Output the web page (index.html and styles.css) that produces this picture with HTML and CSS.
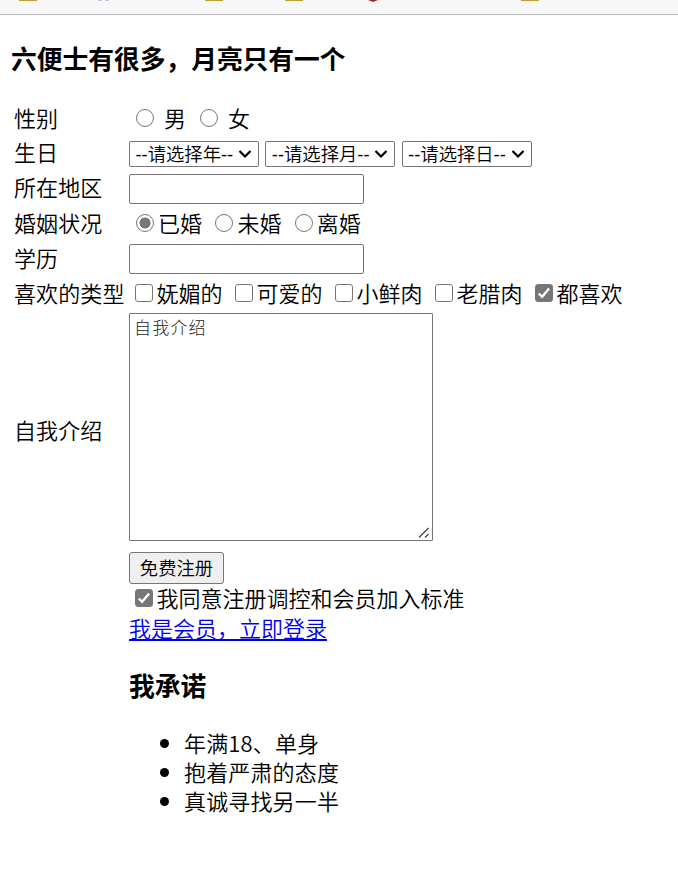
FILE: index.html
```html
<!DOCTYPE html>
<html lang="zh-CN">
<head>
<meta charset="utf-8">
<title>注册</title>
<link rel="stylesheet" href="styles.css">
</head>
<body>
<div class="bookmarks">
  <svg width="678" height="14" viewBox="0 0 678 14">
    <g fill="#c49b3c"><path d="M19 0h18v1H19zM205 0h18v1h-18zM285 0h18v1h-18zM521 0h18v1h-18z"/></g>
    <path d="M94 0h20q-1 2-4 2H98q-3 0-4-2z" fill="#fff"/>
    <path d="M98 0h4v1h-4zM105 0h4v1h-4z" fill="#b9bcf5"/>
    <path d="M368 0h10l-5 2z" fill="#a8232b"/>
  </svg>
</div>
<main>
  <h3 class="title">六便士有很多，月亮只有一个</h3>
  <form class="form">
    <span class="label">性别</span>
    <div class="options gender">
      <label><input type="radio" name="sex">男</label>
      <label><input type="radio" name="sex">女</label>
    </div>

    <span class="label raised">生日</span>
    <div class="selects">
      <span class="select"><select><option>--请选择年--</option></select><svg viewBox="0 0 14 10"><path d="M1.5 2 7 7.5 12.5 2"/></svg></span>
      <span class="select"><select><option>--请选择月--</option></select><svg viewBox="0 0 14 10"><path d="M1.5 2 7 7.5 12.5 2"/></svg></span>
      <span class="select"><select><option>--请选择日--</option></select><svg viewBox="0 0 14 10"><path d="M1.5 2 7 7.5 12.5 2"/></svg></span>
    </div>

    <span class="label raised">所在地区</span>
    <input class="field" type="text">

    <span class="label">婚姻状况</span>
    <div class="options marital">
      <label><input type="radio" name="marital" checked>已婚</label>
      <label><input type="radio" name="marital">未婚</label>
      <label><input type="radio" name="marital">离婚</label>
    </div>

    <span class="label">学历</span>
    <input class="field" type="text">

    <span class="label lowered">喜欢的类型</span>
    <div class="options types">
      <label><input type="checkbox">妩媚的</label>
      <label><input type="checkbox">可爱的</label>
      <label><input type="checkbox">小鲜肉</label>
      <label><input type="checkbox">老腊肉</label>
      <label><input type="checkbox" checked>都喜欢</label>
    </div>

    <span class="label intro-label">自我介绍</span>
    <div class="intro">
      <textarea>自我介绍</textarea>
      <svg class="grip" viewBox="0 0 12 12"><path d="M1 10.5 10.5 1M7 10.5 10.5 7"/></svg>
    </div>

    <div class="footer">
      <button type="button">免费注册</button>
      <div class="options agree"><label><input type="checkbox" checked>我同意注册调控和会员加入标准</label></div>
      <div class="login"><a href="#">我是会员，立即登录</a></div>
      <h3>我承诺</h3>
      <ul>
        <li>年满18、单身</li>
        <li>抱着严肃的态度</li>
        <li>真诚寻找另一半</li>
      </ul>
    </div>
  </form>
</main>
</body>
</html>
```
FILE: styles.css
```css
* { box-sizing: border-box; }
body {
  margin: 0;
  background: #fff;
  color: #000;
  font: 350 22px/29px "Noto Sans CJK SC", sans-serif;
  overflow: hidden;
}
.bookmarks { height: 15px; background: #f7f7f7; border-bottom: 1px solid #b9b9b9; }
.bookmarks svg { display: block; }
h3 { margin: 0; font-size: 25.74px; line-height: 34px; font-weight: 700; }
.title { padding: 26px 0 0 11px; }
.form {
  display: grid;
  grid-template-columns: 110px 1fr;
  grid-template-rows: 30px 30px 30px 30px 30px 29px 228px auto;
  gap: 5px;
  padding: 29px 0 0 14px;
  align-items: center;
}
.label { white-space: nowrap; padding-bottom: 4px; letter-spacing: 0.1px; }
.label.raised { padding-bottom: 6px; }
.label.lowered { padding-bottom: 2px; }
.options { display: flex; white-space: nowrap; }
.options label { display: flex; align-items: center; padding-bottom: 3px; }
input[type="radio"], input[type="checkbox"] {
  appearance: none;
  flex: none;
  width: 18px;
  height: 18px;
  margin: 1px 4px 0 0;
  border: 1px solid #767676;
  background: #fff;
}
input[type="radio"] { border-radius: 50%; }
input[type="radio"]:checked { background: radial-gradient(circle, #767676 5.2px, #fff 5.8px); }
input[type="checkbox"] { border-radius: 3px; }
input[type="checkbox"]:checked {
  background: #767676 url("data:image/svg+xml,%3Csvg xmlns='http://www.w3.org/2000/svg' viewBox='0 0 16 16'%3E%3Cpath d='M2.7 8.5l3.4 3.3 7-8.3' fill='none' stroke='white' stroke-width='2.4'/%3E%3C/svg%3E") center / 16px no-repeat;
}
.gender { padding-left: 7px; gap: 14px; }
.gender input { margin-right: 10px; }
.marital { padding-left: 7px; gap: 13.4px; }
.types { padding-left: 6px; gap: 12.4px; }
.types input, .agree input { margin-right: 3.6px; }
.agree { padding-left: 6px; height: 29px; }
.selects { display: flex; gap: 6.3px; }
.select { display: grid; grid-template-columns: 104px 14px 1fr; width: 130px; height: 26px; align-items: center; }
.select select {
  grid-area: 1 / 1 / 2 / 4;
  appearance: none;
  width: 130px;
  height: 26px;
  padding: 2px 0 0 5.5px;
  border: 1px solid #767676;
  border-radius: 2px;
  background: #fff;
  color: #000;
  font: 350 18.33px/22px "Liberation Sans", "Noto Sans CJK SC", sans-serif;
}
.select svg { grid-area: 1 / 2; width: 14px; height: 10px; z-index: 1; pointer-events: none; margin-left: 5px; }
.select path { fill: none; stroke: #000; stroke-width: 2.2; }
.field { width: 235px; height: 30px; border: 1px solid #767676; border-radius: 2px; font: inherit; }
.intro-label { padding: 4px 0 0; }
.intro { position: relative; width: 304px; height: 228px; }
.intro textarea {
  display: block;
  width: 304px;
  height: 228px;
  padding: 1px 4px;
  border: 1px solid #767676;
  border-radius: 1px;
  resize: none;
  color: #222;
  font: 300 17px/24px "Noto Sans CJK SC", sans-serif;
  letter-spacing: 1.2px;
}
.grip { position: absolute; right: 3px; bottom: 2px; width: 12px; height: 12px; }
.grip path { fill: none; stroke: #444; stroke-width: 1.3; }
.footer { grid-column: 2; padding-top: 6px; }
button {
  display: block;
  width: 95px;
  height: 32px;
  padding: 0 0 2px;
  border: 1px solid #767676;
  border-radius: 3px;
  background: #efefef;
  color: #000;
  font: 350 18.33px/28px "Noto Sans CJK SC", sans-serif;
}
.login a { color: #00e; text-decoration: underline; }
.footer h3 { margin-top: 26px; }
ul { margin: 26px 0 0; padding-left: 55px; letter-spacing: 0.15px; }
```
